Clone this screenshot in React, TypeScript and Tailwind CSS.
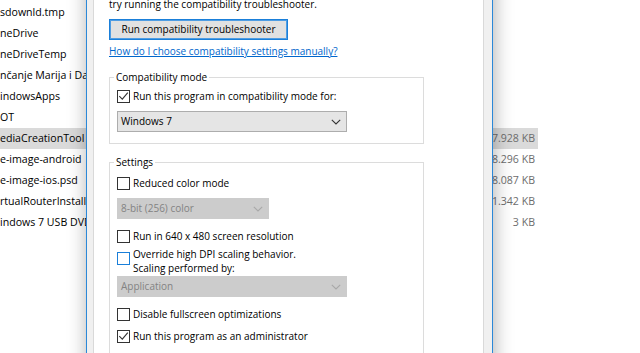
import React from "react";

type Row = { n: string; s?: string; sel?: boolean };

const rows: Row[] = [
  { n: "sdownld.tmp" },
  { n: "neDrive" },
  { n: "neDriveTemp" },
  { n: "nčanje Marija i Danijel" },
  { n: "indowsApps" },
  { n: "OT" },
  { n: "ediaCreationTool", s: "17.928 KB", sel: true },
  { n: "e-image-android", s: "18.296 KB" },
  { n: "e-image-ios.psd", s: "18.087 KB" },
  { n: "rtualRouterInstaller", s: "11.342 KB" },
  { n: "indows 7 USB DVD", s: "3 KB" },
];

function Check({ checked, blue }: { checked?: boolean; blue?: boolean }) {
  return (
    <span
      className={`flex h-[13px] w-[13px] shrink-0 items-center justify-center border bg-white ${
        blue ? "border-[#1a7fd9]" : "border-[#333333]"
      }`}
    >
      {checked && (
        <svg width="11" height="11" viewBox="0 0 11 11">
          <path d="M1.3 5.2 L4.3 8.2 L9.8 1.6" fill="none" stroke="#333333" strokeWidth="1.1" />
        </svg>
      )}
    </span>
  );
}

function Chevron({ color }: { color: string }) {
  return (
    <svg width="10" height="6" viewBox="0 0 10 6">
      <path d="M0.8 0.8 L5 5 L9.2 0.8" fill="none" stroke={color} strokeWidth="1.1" />
    </svg>
  );
}

function CheckRow({
  label,
  checked,
  className,
}: {
  label: string;
  checked?: boolean;
  className: string;
}) {
  return (
    <div className={`flex h-[15px] items-center gap-[3px] leading-[15px] ${className}`}>
      <Check checked={checked} />
      <span className="whitespace-nowrap">{label}</span>
    </div>
  );
}

export default function App() {
  return (
    <div className="relative h-[353px] w-[640px] overflow-hidden bg-white font-['Open_Sans','Noto_Sans',sans-serif] text-[10px] text-black">
      {/* Explorer underneath */}
      <div className="flex flex-col pt-[2px] text-[10.6px]">
        {rows.map((r, i) => (
          <div
            key={i}
            className={`flex h-[21px] w-[538px] items-center ${r.sel ? "bg-[#dadada]" : ""}`}
          >
            <span className="w-[400px] whitespace-nowrap">{r.n}</span>
            {r.s && <span className="ml-auto pr-[3px] text-[#6d6d6d]">{r.s}</span>}
          </div>
        ))}
      </div>

      {/* Properties dialog window */}
      <div className="absolute left-[86px] top-[-40px] w-[407px] border border-[#2b88d8] bg-[#f0f0f0] pl-[6px] pr-[8px] shadow-[1px_0_18px_rgba(0,0,0,0.32)]">
        <div className="border border-[#d9d9d9] bg-white pb-[40px] pl-[15px] pt-[35px]">
          <div className="h-[15px] whitespace-nowrap leading-[15px]">
            try running the compatibility troubleshooter.
          </div>
          <div className="mt-[7px] flex h-[21px] w-[179px] items-center justify-center border border-[#1a7fd9] bg-[#e1e1e1] shadow-[inset_0_0_0_1px_#4f9de3]">
            Run compatibility troubleshooter
          </div>
          <div className="mt-[4px] h-[15px] leading-[15px] text-[#0066cc] underline">
            How do I choose compatibility settings manually?
          </div>

          <fieldset className="mt-[11px] w-[315px] border border-[#dcdcdc]">
            <legend className="ml-[4px] px-[2px] leading-[15px]">Compatibility mode</legend>
            <div className="pb-[11px] pl-[7px] pt-[4px]">
              <CheckRow checked label="Run this program in compatibility mode for:" className="" />
              <div className="mt-[7px] flex h-[21px] w-[230px] items-center justify-between border border-[#adadad] bg-[#e5e5e5] pl-[3px] pr-[5px]">
                <span>Windows 7</span>
                <Chevron color="#333333" />
              </div>
            </div>
          </fieldset>

          <fieldset className="mt-[11px] w-[315px] border border-[#dcdcdc]">
            <legend className="ml-[4px] px-[2px] leading-[15px]">Settings</legend>
            <div className="pb-[40px] pl-[7px]">
              <CheckRow label="Reduced color mode" className="mt-[6px]" />
              <div className="mt-[7px] flex h-[21px] w-[152px] items-center justify-between border border-[#cccccc] bg-[#cccccc] pl-[3px] pr-[5px] text-[#838383]">
                <span>8-bit (256) color</span>
                <Chevron color="#a8a8a8" />
              </div>
              <CheckRow label="Run in 640 x 480 screen resolution" className="mt-[10px]" />
              <div className="mt-[3px] flex items-start gap-[3px]">
                <span className="mt-[5px]">
                  <Check blue />
                </span>
                <div className="whitespace-nowrap leading-[14px]">
                  Override high DPI scaling behavior.
                  <br />
                  Scaling performed by:
                </div>
              </div>
              <div className="mt-[1px] flex h-[21px] w-[230px] items-center justify-between border border-[#cccccc] bg-[#cccccc] pl-[3px] pr-[5px] text-[#838383]">
                <span>Application</span>
                <Chevron color="#a8a8a8" />
              </div>
              <CheckRow label="Disable fullscreen optimizations" className="mt-[10px]" />
              <CheckRow checked label="Run this program as an administrator" className="mt-[7px]" />
            </div>
          </fieldset>
        </div>
      </div>
    </div>
  );
}
